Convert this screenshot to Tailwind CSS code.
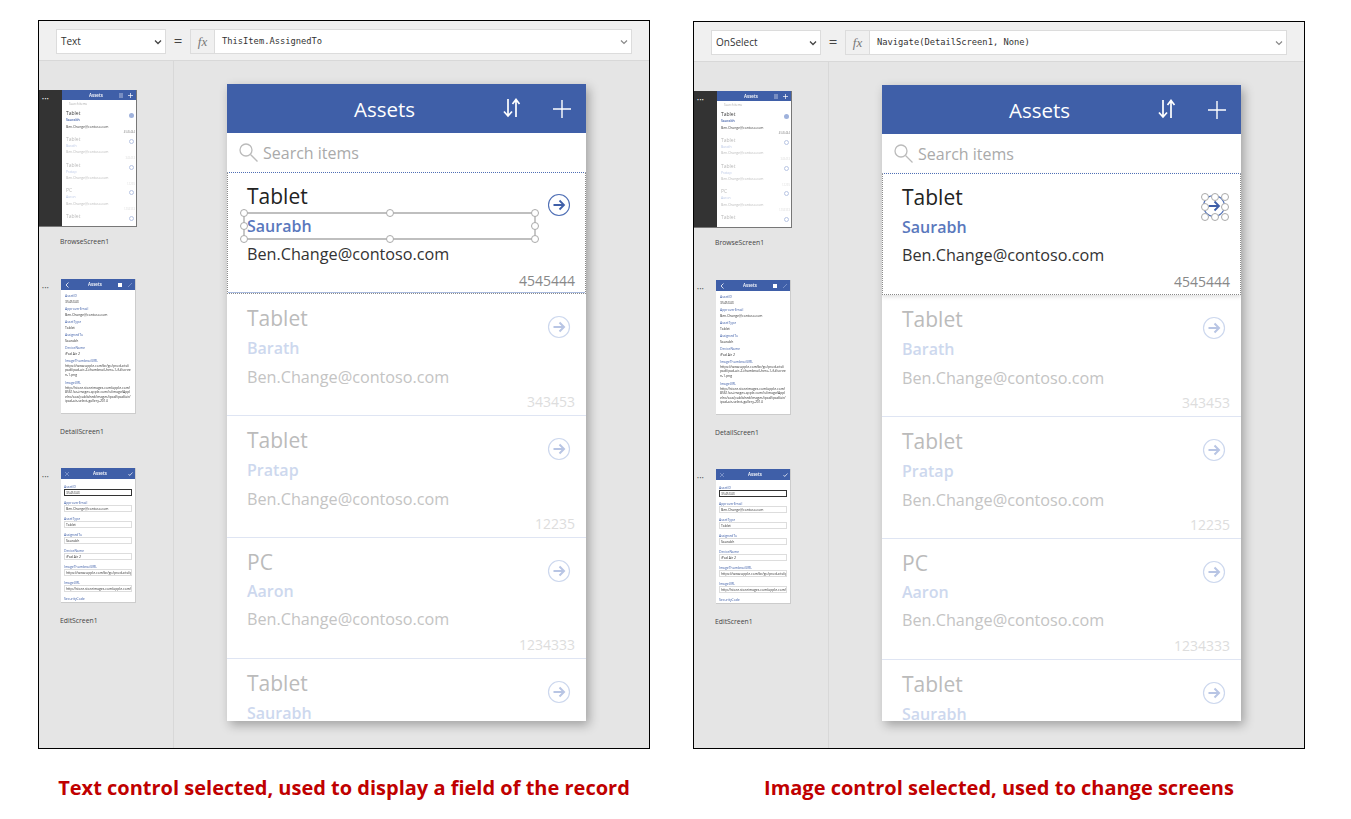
<!DOCTYPE html>
<html>

<head>
  <title>Assets screens</title>
  <meta charset="utf-8" />
  <script src="https://cdn.jsdelivr.net/npm/@tailwindcss/browser@4"></script>
</head>

<body class="bg-white font-['Open_Sans',sans-serif]">
  <div class="flex items-end gap-[43px] pl-[38px] pt-[20px]">

    <!-- left panel: text control selected -->
    <div class="flex h-[729px] w-[612px] flex-col border border-black bg-[#e5e5e5]">
      <!-- formula bar -->
      <div class="flex h-[40px] shrink-0 items-start border-b border-[#d8d8d8] bg-[#f0f0f0] pl-[17px] pt-[8px]">
        <div class="flex h-[25px] w-[110px] items-center justify-between border border-[#dcdcdc] bg-white pl-[4px] pr-[3px] text-[10px] text-[#333]">Text
          <svg width="8" height="6" viewBox="0 0 8 6"><path d="M1 1.5l3 3 3-3" fill="none" stroke="#444" stroke-width="1.3"/></svg>
        </div>
        <div class="w-[24px] text-center text-[15px] leading-[22px] text-[#444]">=</div>
        <div class="flex h-[25px] w-[25px] items-center justify-center border border-[#dcdcdc] bg-[#f0f0f0] font-['Liberation_Serif',serif] text-[13px] italic text-[#777]">fx</div>
        <div class="flex h-[25px] w-[417px] items-center justify-between border border-l-0 border-[#dcdcdc] bg-white pl-[7px] pr-[3px] font-['DejaVu_Sans_Mono',monospace] text-[8.75px] text-[#333]">ThisItem.AssignedTo
          <svg width="8" height="6" viewBox="0 0 8 6"><path d="M1 1.5l3 3 3-3" fill="none" stroke="#888" stroke-width="1.2"/></svg>
        </div>
      </div>
      <div class="flex min-h-0 flex-1">
        <!-- screen thumbnails -->
        <div class="w-[135px] shrink-0 border-r border-[#d8d8d8] pt-[29px]">
          <div class="h-[189px]">
            <div class="flex h-[137px] w-[98px] border-b border-r border-[#777] bg-[#333]">
              <div class="w-[23px] pl-[3px] text-[5px] leading-[18px] tracking-[0.5px] text-white">•••</div>
              <div class="flex-1 overflow-hidden bg-white blur-[0.25px]">
                <div class="flex h-[10px] items-center bg-[#3f5fa8] pl-[27px] pr-[3px] text-[4.5px] font-semibold text-white">Assets<svg class="ml-auto mr-[5px]" width="4" height="5" viewBox="0 0 4 5" stroke="white" stroke-width="0.6"><path d="M1 0v5M3 0v5"/></svg><svg width="5" height="5" viewBox="0 0 5 5" stroke="white" stroke-width="0.7"><path d="M2.5 0v5M0 2.5h5"/></svg></div>
                <div class="h-[10px] pl-[7px] text-[3px] leading-[8px] text-[#aaa]">Search items</div>
                <div class="h-[25.75px] pl-[4px] pr-[1px] text-[3.4px] leading-[6.5px] text-[#444]"><span class="float-right mr-[1px] mt-[3px] h-[5px] w-[5px] rounded-full bg-[#9fb2dc]"></span><div class="text-[5px] leading-[7px]">Tablet</div><div class="font-semibold text-[#3f5fa8]">Saurabh</div><div>Ben.Change@contoso.com</div><div class="text-right text-[2.8px] leading-[4px] text-[#888]">4545444</div></div>
                <div class="h-[25.75px] pl-[4px] pr-[1px] text-[3.4px] leading-[6.5px] text-[#bbb]"><span class="float-right mr-[1px] mt-[3px] h-[5px] w-[5px] rounded-full border-[0.5px] border-[#b8c5e4]"></span><div class="text-[5px] leading-[7px]">Tablet</div><div class="text-[#bcc9e6]">Barath</div><div>Ben.Change@contoso.com</div><div class="text-right text-[2.8px] leading-[4px] text-[#ddd]">343453</div></div>
                <div class="h-[25.75px] pl-[4px] pr-[1px] text-[3.4px] leading-[6.5px] text-[#bbb]"><span class="float-right mr-[1px] mt-[3px] h-[5px] w-[5px] rounded-full border-[0.5px] border-[#b8c5e4]"></span><div class="text-[5px] leading-[7px]">Tablet</div><div class="text-[#bcc9e6]">Pratap</div><div>Ben.Change@contoso.com</div><div class="text-right text-[2.8px] leading-[4px] text-[#ddd]">12235</div></div>
                <div class="h-[25.75px] pl-[4px] pr-[1px] text-[3.4px] leading-[6.5px] text-[#bbb]"><span class="float-right mr-[1px] mt-[3px] h-[5px] w-[5px] rounded-full border-[0.5px] border-[#b8c5e4]"></span><div class="text-[5px] leading-[7px]">PC</div><div class="text-[#bcc9e6]">Aaron</div><div>Ben.Change@contoso.com</div><div class="text-right text-[2.8px] leading-[4px] text-[#ddd]">1234333</div></div>
                <div class="pl-[4px] pr-[1px] text-[5px] leading-[7px] text-[#bbb]"><span class="float-right mr-[1px] mt-[3px] h-[5px] w-[5px] rounded-full border-[0.5px] border-[#b8c5e4]"></span>Tablet</div>
              </div>
            </div>
            <div class="ml-[21px] mt-[9px] text-[6.8px] leading-[12px] text-[#444]">BrowseScreen1</div>
          </div>
          <div class="h-[189px]">
            <div class="flex h-[135px]">
              <div class="w-[22px] pl-[3px] text-[5px] leading-[18px] tracking-[0.5px] text-[#555]">•••</div>
              <div class="w-[75px] overflow-hidden border-b border-r border-[#ccc] bg-white blur-[0.25px]">
                <div class="flex h-[11px] items-center bg-[#3f5fa8] pl-[4px] pr-[3px] text-[4.5px] font-semibold text-white"><svg width="4" height="6" viewBox="0 0 4 6" fill="none" stroke="white" stroke-width="0.8"><path d="M3.5 0.5L1 3l2.5 2.5"/></svg><span class="ml-[19px]">Assets</span><span class="ml-auto mr-[6px] h-[4px] w-[4px] bg-white"></span><svg width="4" height="4" viewBox="0 0 4 4" fill="none" stroke="#9fb2dc" stroke-width="0.6"><path d="M0 4L4 0"/></svg></div>
                <div class="px-[4px] pt-[3px] text-[3.4px] leading-[5.5px] text-[#333]">
                  <div class="text-[#3f5fa8]">AssetID</div><div class="mb-[2px]">3545343</div>
                  <div class="text-[#3f5fa8]">ApproverEmail</div><div class="mb-[2px]">Ben.Change@contoso.com</div>
                  <div class="text-[#3f5fa8]">AssetType</div><div class="mb-[2px]">Tablet</div>
                  <div class="text-[#3f5fa8]">AssignedTo</div><div class="mb-[2px]">Saurabh</div>
                  <div class="text-[#3f5fa8]">DeviceName</div><div class="mb-[2px]">iPad Air 2</div>
                  <div class="text-[#3f5fa8]">ImageThumbnailURL</div><div class="mb-[3px] break-all leading-[4.5px]">https://www.apple.com/br/go/products/ipad/ipad-air-2-thumbnail-hero-1-fullscreen-1.png</div>
                  <div class="text-[#3f5fa8]">ImageURL</div><div class="break-all leading-[4.5px]">http://store.storeimages.com/apple.com/8561/as-images.apple.com/is/image/AppleInc/aos/published/images/ipad/ipad/air/ipad-air-select-gallery-2014</div>
                </div>
              </div>
            </div>
            <div class="ml-[21px] mt-[12px] text-[6.8px] leading-[12px] text-[#444]">DetailScreen1</div>
          </div>
          <div>
            <div class="flex h-[135px]">
              <div class="w-[22px] pl-[3px] text-[5px] leading-[18px] tracking-[0.5px] text-[#555]">•••</div>
              <div class="w-[75px] overflow-hidden border-b border-r border-[#ccc] bg-white blur-[0.25px]">
                <div class="flex h-[11px] items-center bg-[#3f5fa8] pl-[4px] pr-[2px] text-[4.5px] font-semibold text-white"><svg width="4" height="4" viewBox="0 0 4 4" stroke="#9fb2dc" stroke-width="0.6"><path d="M0 0l4 4M4 0L0 4"/></svg><span class="ml-[24px]">Assets</span><svg class="ml-auto" width="5" height="4" viewBox="0 0 5 4" fill="none" stroke="white" stroke-width="0.7"><path d="M0.5 2l1.2 1.5L4.5 0.5"/></svg></div>
                <div class="px-[3px] pt-[5px] text-[3.4px] leading-[5px] text-[#333]">
                  <div class="text-[#3f5fa8]">AssetID</div><div class="mb-[4px] h-[7px] border border-[#333] pl-[1px]">3545343</div>
                  <div class="text-[#3f5fa8]">ApproverEmail</div><div class="mb-[4px] h-[7px] overflow-hidden border border-[#ddd] pl-[1px]">Ben.Change@contoso.com</div>
                  <div class="text-[#3f5fa8]">AssetType</div><div class="mb-[4px] h-[7px] overflow-hidden border border-[#ddd] pl-[1px]">Tablet</div>
                  <div class="text-[#3f5fa8]">AssignedTo</div><div class="mb-[4px] h-[7px] overflow-hidden border border-[#ddd] pl-[1px]">Saurabh</div>
                  <div class="text-[#3f5fa8]">DeviceName</div><div class="mb-[4px] h-[7px] overflow-hidden border border-[#ddd] pl-[1px]">iPad Air 2</div>
                  <div class="text-[#3f5fa8]">ImageThumbnailURL</div><div class="mb-[4px] h-[7px] overflow-hidden whitespace-nowrap border border-[#ddd] pl-[1px]">https://www.apple.com/br/go/products/ipad</div>
                  <div class="text-[#3f5fa8]">ImageURL</div><div class="mb-[4px] h-[7px] overflow-hidden whitespace-nowrap border border-[#ddd] pl-[1px]">http://store.storeimages.com/apple.com/8561</div>
                  <div class="text-[#3f5fa8]">SecurityCode</div>
                </div>
              </div>
            </div>
            <div class="ml-[21px] mt-[12px] text-[6.8px] leading-[12px] text-[#444]">EditScreen1</div>
          </div>
        </div>
        <!-- canvas with the phone screen -->
        <div class="flex-1 pl-[53px] pt-[23px]">
          <div class="h-[637px] w-[359px] overflow-hidden bg-white shadow-[3px_4px_10px_rgba(0,0,0,0.3)]">
            <div class="flex h-[49px] items-center bg-[#3f5fa8] pl-[127px] pr-[14px] text-[20.5px] text-white"><span class="mt-[2px]">Assets</span>
              <svg class="mb-[2px] ml-auto mr-[29px]" width="22" height="22" viewBox="0 0 22 22" fill="none" stroke="white" stroke-width="1.7"><path d="M7 2v17M3 14.5l4 4.5 4-4.5"/><path d="M15 20V3M11.5 7L15 2.5 18.5 7"/></svg>
              <svg width="20" height="20" viewBox="0 0 20 20" stroke="white" stroke-width="1.4"><path d="M10 1v18M1 10h18"/></svg>
            </div>
            <div class="flex h-[39px] items-center gap-[4px] pl-[11px] text-[16px] text-[#aaa]">
              <svg width="21" height="21" viewBox="0 0 21 21" fill="none" stroke="#bbb" stroke-width="1.3"><circle cx="8" cy="8" r="6"/><path d="M12.5 12.5l7 7"/></svg>Search items
            </div>
            <div class="relative flex h-[122px] justify-between border border-dotted border-[#8a8a8a] pl-[19px] pr-[10px] shadow-[inset_0_-1px_0_#a9bbdf] [border-top-color:#4f6fb5]">
              <div class="pt-[9px] text-[16.2px]">
                <div class="text-[21px] leading-[28px] text-[#222]">Tablet</div>
                <div class="text-[16px] font-semibold leading-[32px] text-[#5a78bd]">Saurabh</div>
                <div class="leading-[24px] text-[#333]">Ben.Change@contoso.com</div>
              </div>
              <div class="flex flex-col items-end justify-between pb-[2px] pt-[20px] text-[14px] leading-[20px] text-[#888]">
                <svg class="mr-[4px]" width="24" height="24" viewBox="0 0 24 24" fill="none"><circle cx="12" cy="12" r="10.5" stroke="#4f6fb5" stroke-width="1.1"/><path d="M6.5 12h10M12.5 7.5L17 12l-4.5 4.5" stroke="#3f5fa8" stroke-width="1.8"/></svg>
                4545444
              </div>
              <svg class="absolute left-[12px] top-[36px]" width="300" height="36" viewBox="0 0 300 36" fill="white" stroke="#aaa"><path d="M4 4h291v26H4z" fill="none" stroke-width="1.3"/><circle cx="4" cy="4" r="3.5"/><circle cx="150" cy="4" r="3.5"/><circle cx="295" cy="4" r="3.5"/><circle cx="4" cy="17" r="3.5"/><circle cx="295" cy="17" r="3.5"/><circle cx="4" cy="30" r="3.5"/><circle cx="150" cy="30" r="3.5"/><circle cx="295" cy="30" r="3.5"/></svg>
            </div>
            <div class="flex h-[121.75px] justify-between border-b border-[#dfe5f3] pl-[20px] pr-[11px] pt-[1px] text-[16.2px]">
              <div class="pt-[9px]">
                <div class="text-[21px] leading-[28px] text-[#bbb]">Tablet</div>
                <div class="text-[16px] font-semibold leading-[32px] text-[#cdd8ee]">Barath</div>
                <div class="mt-[1px] leading-[24px] text-[#c4c4c4]">Ben.Change@contoso.com</div>
              </div>
              <div class="flex flex-col items-end justify-between pb-[3px] pt-[20px] text-[14px] leading-[20px] text-[#ddd]">
                <svg class="mr-[4px]" width="24" height="24" viewBox="0 0 24 24" fill="none"><circle cx="12" cy="12" r="10.5" stroke="#cdd8ee" stroke-width="1.2"/><path d="M6.5 12h10M12.5 7.5L17 12l-4.5 4.5" stroke="#b8c5e4" stroke-width="2"/></svg>
                343453
              </div>
            </div>
            <div class="flex h-[121.75px] justify-between border-b border-[#dfe5f3] pl-[20px] pr-[11px] pt-[1px] text-[16.2px]">
              <div class="pt-[9px]">
                <div class="text-[21px] leading-[28px] text-[#bbb]">Tablet</div>
                <div class="text-[16px] font-semibold leading-[32px] text-[#cdd8ee]">Pratap</div>
                <div class="mt-[1px] leading-[24px] text-[#c4c4c4]">Ben.Change@contoso.com</div>
              </div>
              <div class="flex flex-col items-end justify-between pb-[3px] pt-[20px] text-[14px] leading-[20px] text-[#ddd]">
                <svg class="mr-[4px]" width="24" height="24" viewBox="0 0 24 24" fill="none"><circle cx="12" cy="12" r="10.5" stroke="#cdd8ee" stroke-width="1.2"/><path d="M6.5 12h10M12.5 7.5L17 12l-4.5 4.5" stroke="#b8c5e4" stroke-width="2"/></svg>
                12235
              </div>
            </div>
            <div class="flex h-[121.75px] justify-between border-b border-[#dfe5f3] pl-[20px] pr-[11px] pt-[1px] text-[16.2px]">
              <div class="pt-[9px]">
                <div class="text-[21px] leading-[28px] text-[#bbb]">PC</div>
                <div class="text-[16px] font-semibold leading-[31px] text-[#cdd8ee]">Aaron</div>
                <div class="leading-[24px] text-[#c4c4c4]">Ben.Change@contoso.com</div>
              </div>
              <div class="flex flex-col items-end justify-between pb-[3px] pt-[20px] text-[14px] leading-[20px] text-[#ddd]">
                <svg class="mr-[4px]" width="24" height="24" viewBox="0 0 24 24" fill="none"><circle cx="12" cy="12" r="10.5" stroke="#cdd8ee" stroke-width="1.2"/><path d="M6.5 12h10M12.5 7.5L17 12l-4.5 4.5" stroke="#b8c5e4" stroke-width="2"/></svg>
                1234333
              </div>
            </div>
            <div class="flex justify-between pl-[20px] pr-[11px] pt-[1px] text-[16px]">
              <div class="pt-[9px]">
                <div class="text-[21px] leading-[28px] text-[#bbb]">Tablet</div>
                <div class="font-semibold leading-[32px] text-[#cdd8ee]">Saurabh</div>
              </div>
              <svg class="mr-[4px] mt-[20px]" width="24" height="24" viewBox="0 0 24 24" fill="none"><circle cx="12" cy="12" r="10.5" stroke="#cdd8ee" stroke-width="1.2"/><path d="M6.5 12h10M12.5 7.5L17 12l-4.5 4.5" stroke="#b8c5e4" stroke-width="2"/></svg>
            </div>
          </div>
        </div>
      </div>
    </div>

    <!-- right panel: image control selected -->
    <div class="flex h-[728px] w-[612px] flex-col border border-black bg-[#e5e5e5]">
      <div class="flex h-[40px] shrink-0 items-start border-b border-[#d8d8d8] bg-[#f0f0f0] pl-[17px] pt-[8px]">
        <div class="flex h-[25px] w-[110px] items-center justify-between border border-[#dcdcdc] bg-white pl-[4px] pr-[3px] text-[10px] text-[#333]">OnSelect
          <svg width="8" height="6" viewBox="0 0 8 6"><path d="M1 1.5l3 3 3-3" fill="none" stroke="#444" stroke-width="1.3"/></svg>
        </div>
        <div class="w-[24px] text-center text-[15px] leading-[22px] text-[#444]">=</div>
        <div class="flex h-[25px] w-[25px] items-center justify-center border border-[#dcdcdc] bg-[#f0f0f0] font-['Liberation_Serif',serif] text-[13px] italic text-[#777]">fx</div>
        <div class="flex h-[25px] w-[417px] items-center justify-between border border-l-0 border-[#dcdcdc] bg-white pl-[7px] pr-[3px] font-['DejaVu_Sans_Mono',monospace] text-[8.75px] text-[#333]">Navigate(DetailScreen1, None)
          <svg width="8" height="6" viewBox="0 0 8 6"><path d="M1 1.5l3 3 3-3" fill="none" stroke="#888" stroke-width="1.2"/></svg>
        </div>
      </div>
      <div class="flex min-h-0 flex-1">
        <div class="w-[135px] shrink-0 border-r border-[#d8d8d8] pt-[29px]">
          <div class="h-[189px]">
            <div class="flex h-[137px] w-[98px] border-b border-r border-[#777] bg-[#333]">
              <div class="w-[23px] pl-[3px] text-[5px] leading-[18px] tracking-[0.5px] text-white">•••</div>
              <div class="flex-1 overflow-hidden bg-white blur-[0.25px]">
                <div class="flex h-[10px] items-center bg-[#3f5fa8] pl-[27px] pr-[3px] text-[4.5px] font-semibold text-white">Assets<svg class="ml-auto mr-[5px]" width="4" height="5" viewBox="0 0 4 5" stroke="white" stroke-width="0.6"><path d="M1 0v5M3 0v5"/></svg><svg width="5" height="5" viewBox="0 0 5 5" stroke="white" stroke-width="0.7"><path d="M2.5 0v5M0 2.5h5"/></svg></div>
                <div class="h-[10px] pl-[7px] text-[3px] leading-[8px] text-[#aaa]">Search items</div>
                <div class="h-[25.75px] pl-[4px] pr-[1px] text-[3.4px] leading-[6.5px] text-[#444]"><span class="float-right mr-[1px] mt-[3px] h-[5px] w-[5px] rounded-full bg-[#9fb2dc]"></span><div class="text-[5px] leading-[7px]">Tablet</div><div class="font-semibold text-[#3f5fa8]">Saurabh</div><div>Ben.Change@contoso.com</div><div class="text-right text-[2.8px] leading-[4px] text-[#888]">4545444</div></div>
                <div class="h-[25.75px] pl-[4px] pr-[1px] text-[3.4px] leading-[6.5px] text-[#bbb]"><span class="float-right mr-[1px] mt-[3px] h-[5px] w-[5px] rounded-full border-[0.5px] border-[#b8c5e4]"></span><div class="text-[5px] leading-[7px]">Tablet</div><div class="text-[#bcc9e6]">Barath</div><div>Ben.Change@contoso.com</div><div class="text-right text-[2.8px] leading-[4px] text-[#ddd]">343453</div></div>
                <div class="h-[25.75px] pl-[4px] pr-[1px] text-[3.4px] leading-[6.5px] text-[#bbb]"><span class="float-right mr-[1px] mt-[3px] h-[5px] w-[5px] rounded-full border-[0.5px] border-[#b8c5e4]"></span><div class="text-[5px] leading-[7px]">Tablet</div><div class="text-[#bcc9e6]">Pratap</div><div>Ben.Change@contoso.com</div><div class="text-right text-[2.8px] leading-[4px] text-[#ddd]">12235</div></div>
                <div class="h-[25.75px] pl-[4px] pr-[1px] text-[3.4px] leading-[6.5px] text-[#bbb]"><span class="float-right mr-[1px] mt-[3px] h-[5px] w-[5px] rounded-full border-[0.5px] border-[#b8c5e4]"></span><div class="text-[5px] leading-[7px]">PC</div><div class="text-[#bcc9e6]">Aaron</div><div>Ben.Change@contoso.com</div><div class="text-right text-[2.8px] leading-[4px] text-[#ddd]">1234333</div></div>
                <div class="pl-[4px] pr-[1px] text-[5px] leading-[7px] text-[#bbb]"><span class="float-right mr-[1px] mt-[3px] h-[5px] w-[5px] rounded-full border-[0.5px] border-[#b8c5e4]"></span>Tablet</div>
              </div>
            </div>
            <div class="ml-[21px] mt-[9px] text-[6.8px] leading-[12px] text-[#444]">BrowseScreen1</div>
          </div>
          <div class="h-[189px]">
            <div class="flex h-[135px]">
              <div class="w-[22px] pl-[3px] text-[5px] leading-[18px] tracking-[0.5px] text-[#555]">•••</div>
              <div class="w-[75px] overflow-hidden border-b border-r border-[#ccc] bg-white blur-[0.25px]">
                <div class="flex h-[11px] items-center bg-[#3f5fa8] pl-[4px] pr-[3px] text-[4.5px] font-semibold text-white"><svg width="4" height="6" viewBox="0 0 4 6" fill="none" stroke="white" stroke-width="0.8"><path d="M3.5 0.5L1 3l2.5 2.5"/></svg><span class="ml-[19px]">Assets</span><span class="ml-auto mr-[6px] h-[4px] w-[4px] bg-white"></span><svg width="4" height="4" viewBox="0 0 4 4" fill="none" stroke="#9fb2dc" stroke-width="0.6"><path d="M0 4L4 0"/></svg></div>
                <div class="px-[4px] pt-[3px] text-[3.4px] leading-[5.5px] text-[#333]">
                  <div class="text-[#3f5fa8]">AssetID</div><div class="mb-[2px]">3545343</div>
                  <div class="text-[#3f5fa8]">ApproverEmail</div><div class="mb-[2px]">Ben.Change@contoso.com</div>
                  <div class="text-[#3f5fa8]">AssetType</div><div class="mb-[2px]">Tablet</div>
                  <div class="text-[#3f5fa8]">AssignedTo</div><div class="mb-[2px]">Saurabh</div>
                  <div class="text-[#3f5fa8]">DeviceName</div><div class="mb-[2px]">iPad Air 2</div>
                  <div class="text-[#3f5fa8]">ImageThumbnailURL</div><div class="mb-[3px] break-all leading-[4.5px]">https://www.apple.com/br/go/products/ipad/ipad-air-2-thumbnail-hero-1-fullscreen-1.png</div>
                  <div class="text-[#3f5fa8]">ImageURL</div><div class="break-all leading-[4.5px]">http://store.storeimages.com/apple.com/8561/as-images.apple.com/is/image/AppleInc/aos/published/images/ipad/ipad/air/ipad-air-select-gallery-2014</div>
                </div>
              </div>
            </div>
            <div class="ml-[21px] mt-[12px] text-[6.8px] leading-[12px] text-[#444]">DetailScreen1</div>
          </div>
          <div>
            <div class="flex h-[135px]">
              <div class="w-[22px] pl-[3px] text-[5px] leading-[18px] tracking-[0.5px] text-[#555]">•••</div>
              <div class="w-[75px] overflow-hidden border-b border-r border-[#ccc] bg-white blur-[0.25px]">
                <div class="flex h-[11px] items-center bg-[#3f5fa8] pl-[4px] pr-[2px] text-[4.5px] font-semibold text-white"><svg width="4" height="4" viewBox="0 0 4 4" stroke="#9fb2dc" stroke-width="0.6"><path d="M0 0l4 4M4 0L0 4"/></svg><span class="ml-[24px]">Assets</span><svg class="ml-auto" width="5" height="4" viewBox="0 0 5 4" fill="none" stroke="white" stroke-width="0.7"><path d="M0.5 2l1.2 1.5L4.5 0.5"/></svg></div>
                <div class="px-[3px] pt-[5px] text-[3.4px] leading-[5px] text-[#333]">
                  <div class="text-[#3f5fa8]">AssetID</div><div class="mb-[4px] h-[7px] border border-[#333] pl-[1px]">3545343</div>
                  <div class="text-[#3f5fa8]">ApproverEmail</div><div class="mb-[4px] h-[7px] overflow-hidden border border-[#ddd] pl-[1px]">Ben.Change@contoso.com</div>
                  <div class="text-[#3f5fa8]">AssetType</div><div class="mb-[4px] h-[7px] overflow-hidden border border-[#ddd] pl-[1px]">Tablet</div>
                  <div class="text-[#3f5fa8]">AssignedTo</div><div class="mb-[4px] h-[7px] overflow-hidden border border-[#ddd] pl-[1px]">Saurabh</div>
                  <div class="text-[#3f5fa8]">DeviceName</div><div class="mb-[4px] h-[7px] overflow-hidden border border-[#ddd] pl-[1px]">iPad Air 2</div>
                  <div class="text-[#3f5fa8]">ImageThumbnailURL</div><div class="mb-[4px] h-[7px] overflow-hidden whitespace-nowrap border border-[#ddd] pl-[1px]">https://www.apple.com/br/go/products/ipad</div>
                  <div class="text-[#3f5fa8]">ImageURL</div><div class="mb-[4px] h-[7px] overflow-hidden whitespace-nowrap border border-[#ddd] pl-[1px]">http://store.storeimages.com/apple.com/8561</div>
                  <div class="text-[#3f5fa8]">SecurityCode</div>
                </div>
              </div>
            </div>
            <div class="ml-[21px] mt-[12px] text-[6.8px] leading-[12px] text-[#444]">EditScreen1</div>
          </div>
        </div>
        <div class="flex-1 pl-[53px] pt-[23px]">
          <div class="h-[636px] w-[359px] overflow-hidden bg-white shadow-[3px_4px_10px_rgba(0,0,0,0.3)]">
            <div class="flex h-[49px] items-center bg-[#3f5fa8] pl-[127px] pr-[14px] text-[20.5px] text-white"><span class="mt-[2px]">Assets</span>
              <svg class="mb-[2px] ml-auto mr-[29px]" width="22" height="22" viewBox="0 0 22 22" fill="none" stroke="white" stroke-width="1.7"><path d="M7 2v17M3 14.5l4 4.5 4-4.5"/><path d="M15 20V3M11.5 7L15 2.5 18.5 7"/></svg>
              <svg width="20" height="20" viewBox="0 0 20 20" stroke="white" stroke-width="1.4"><path d="M10 1v18M1 10h18"/></svg>
            </div>
            <div class="flex h-[39px] items-center gap-[4px] pl-[11px] text-[16px] text-[#aaa]">
              <svg width="21" height="21" viewBox="0 0 21 21" fill="none" stroke="#bbb" stroke-width="1.3"><circle cx="8" cy="8" r="6"/><path d="M12.5 12.5l7 7"/></svg>Search items
            </div>
            <div class="relative flex h-[122px] justify-between border border-dotted border-[#8a8a8a] pl-[19px] pr-[10px] shadow-[0_2px_4px_rgba(0,0,0,0.12)] [border-top-color:#4f6fb5]">
              <div class="pt-[9px] text-[16.2px]">
                <div class="text-[21px] leading-[28px] text-[#222]">Tablet</div>
                <div class="text-[16px] font-semibold leading-[32px] text-[#5a78bd]">Saurabh</div>
                <div class="leading-[24px] text-[#333]">Ben.Change@contoso.com</div>
              </div>
              <div class="flex flex-col items-end justify-between pb-[2px] pt-[20px] text-[14px] leading-[20px] text-[#888]">
                <svg class="mr-[4px]" width="24" height="24" viewBox="0 0 24 24" fill="none"><circle cx="12" cy="12" r="10.5" stroke="#4f6fb5" stroke-width="1.1"/><path d="M6.5 12h10M12.5 7.5L17 12l-4.5 4.5" stroke="#3f5fa8" stroke-width="1.8"/></svg>
                4545444
              </div>
              <svg class="absolute right-[10px] top-[18px]" width="30" height="30" viewBox="0 0 30 30" fill="white" stroke="#aaa"><circle cx="5" cy="5" r="3.5"/><circle cx="15" cy="5" r="3.5"/><circle cx="25" cy="5" r="3.5"/><circle cx="5" cy="15" r="3.5"/><circle cx="25" cy="15" r="3.5"/><circle cx="5" cy="25" r="3.5"/><circle cx="15" cy="25" r="3.5"/><circle cx="25" cy="25" r="3.5"/></svg>
            </div>
            <div class="flex h-[121.75px] justify-between border-b border-[#dfe5f3] pl-[20px] pr-[11px] pt-[1px] text-[16.2px]">
              <div class="pt-[9px]">
                <div class="text-[21px] leading-[28px] text-[#bbb]">Tablet</div>
                <div class="text-[16px] font-semibold leading-[32px] text-[#cdd8ee]">Barath</div>
                <div class="mt-[1px] leading-[24px] text-[#c4c4c4]">Ben.Change@contoso.com</div>
              </div>
              <div class="flex flex-col items-end justify-between pb-[3px] pt-[20px] text-[14px] leading-[20px] text-[#ddd]">
                <svg class="mr-[4px]" width="24" height="24" viewBox="0 0 24 24" fill="none"><circle cx="12" cy="12" r="10.5" stroke="#cdd8ee" stroke-width="1.2"/><path d="M6.5 12h10M12.5 7.5L17 12l-4.5 4.5" stroke="#b8c5e4" stroke-width="2"/></svg>
                343453
              </div>
            </div>
            <div class="flex h-[121.75px] justify-between border-b border-[#dfe5f3] pl-[20px] pr-[11px] pt-[1px] text-[16.2px]">
              <div class="pt-[9px]">
                <div class="text-[21px] leading-[28px] text-[#bbb]">Tablet</div>
                <div class="text-[16px] font-semibold leading-[32px] text-[#cdd8ee]">Pratap</div>
                <div class="mt-[1px] leading-[24px] text-[#c4c4c4]">Ben.Change@contoso.com</div>
              </div>
              <div class="flex flex-col items-end justify-between pb-[3px] pt-[20px] text-[14px] leading-[20px] text-[#ddd]">
                <svg class="mr-[4px]" width="24" height="24" viewBox="0 0 24 24" fill="none"><circle cx="12" cy="12" r="10.5" stroke="#cdd8ee" stroke-width="1.2"/><path d="M6.5 12h10M12.5 7.5L17 12l-4.5 4.5" stroke="#b8c5e4" stroke-width="2"/></svg>
                12235
              </div>
            </div>
            <div class="flex h-[121.75px] justify-between border-b border-[#dfe5f3] pl-[20px] pr-[11px] pt-[1px] text-[16.2px]">
              <div class="pt-[9px]">
                <div class="text-[21px] leading-[28px] text-[#bbb]">PC</div>
                <div class="text-[16px] font-semibold leading-[31px] text-[#cdd8ee]">Aaron</div>
                <div class="leading-[24px] text-[#c4c4c4]">Ben.Change@contoso.com</div>
              </div>
              <div class="flex flex-col items-end justify-between pb-[3px] pt-[20px] text-[14px] leading-[20px] text-[#ddd]">
                <svg class="mr-[4px]" width="24" height="24" viewBox="0 0 24 24" fill="none"><circle cx="12" cy="12" r="10.5" stroke="#cdd8ee" stroke-width="1.2"/><path d="M6.5 12h10M12.5 7.5L17 12l-4.5 4.5" stroke="#b8c5e4" stroke-width="2"/></svg>
                1234333
              </div>
            </div>
            <div class="flex justify-between pl-[20px] pr-[11px] pt-[1px] text-[16px]">
              <div class="pt-[9px]">
                <div class="text-[21px] leading-[28px] text-[#bbb]">Tablet</div>
                <div class="font-semibold leading-[32px] text-[#cdd8ee]">Saurabh</div>
              </div>
              <svg class="mr-[4px] mt-[20px]" width="24" height="24" viewBox="0 0 24 24" fill="none"><circle cx="12" cy="12" r="10.5" stroke="#cdd8ee" stroke-width="1.2"/><path d="M6.5 12h10M12.5 7.5L17 12l-4.5 4.5" stroke="#b8c5e4" stroke-width="2"/></svg>
            </div>
          </div>
        </div>
      </div>
    </div>
  </div>

  <!-- captions -->
  <div class="mt-[25px] flex gap-[43px] pl-[38px] text-center text-[20px] font-bold leading-[28px] text-[#c00000]">
    <div class="w-[612px]">Text control selected, used to display a field of the record</div>
    <div class="w-[612px]">Image control selected, used to change screens</div>
  </div>
</body>

</html>
